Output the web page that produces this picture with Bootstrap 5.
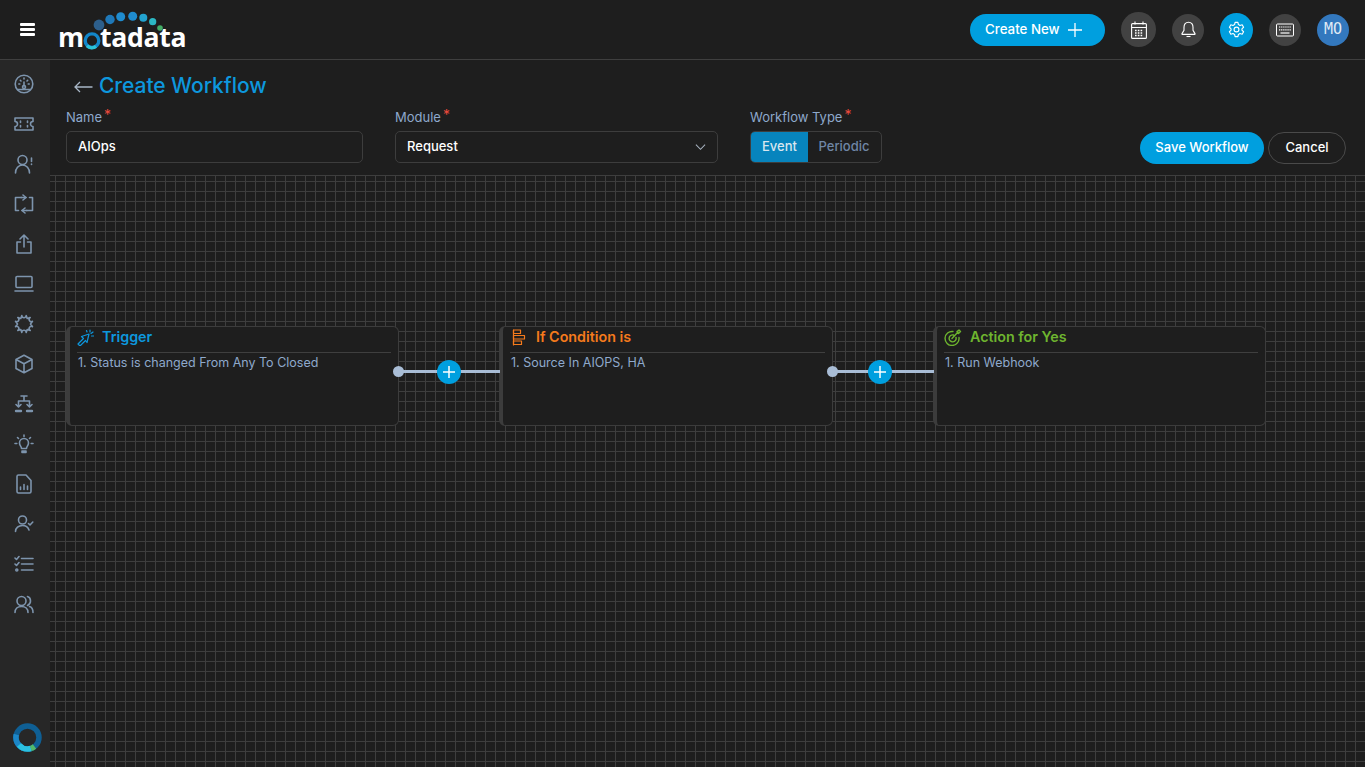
<!DOCTYPE html>
<html lang="en">
<head>
    <meta charset="UTF-8">
    <meta name="viewport" content="width=device-width, initial-scale=1.0">
    <title>Motadata - Create Workflow</title>
    <link href="https://cdn.jsdelivr.net/npm/bootstrap@5.3.0/dist/css/bootstrap.min.css" rel="stylesheet">
    <style>
        html, body { height: 100%; }
        body {
            background: #1e1e1e;
            color: #fff;
            font-family: Inter, "Liberation Sans", sans-serif;
            font-size: 13px;
            overflow: hidden;
        }
        .app-top {
            height: 60px;
            flex: none;
            padding: 0 16px 0 20px;
            background: #1e1e1e;
            border-bottom: 1px solid #3f3f3f;
        }
        .burger { width: 15px; height: 13px; display: flex; flex-direction: column; justify-content: space-between; }
        .burger i { display: block; height: 3px; background: #fff; border-radius: 1px; }

        .brand-logo {
            position: relative;
            margin-left: 23px;
            width: 130px;
            height: 44px;
            margin-top: 1px;
        }
        .brand-word {
            position: absolute;
            left: 0;
            bottom: 0;
            font-family: "Open Sans", sans-serif;
            font-weight: 700;
            font-size: 26.6px;
            line-height: 30px;
            letter-spacing: -.3px;
            color: #fff;
        }
        .brand-o { color: transparent; }
        .brand-art { position: absolute; left: 0; top: 0; }

        .btn-create {
            width: 135px;
            height: 32px;
            padding: 0 0 0 15px;
            border-radius: 16px;
            background: #009fdf;
            border: 0;
            color: #fff;
            font-size: 13.3px;
            font-weight: 500;
            margin-right: 16px;
        }
        .top-round {
            width: 32px;
            height: 32px;
            border-radius: 50%;
            background: #424242;
            flex: none;
            margin-left: 16px;
        }
        .top-round.is-big { width: 35px; height: 35px; margin-left: 0; }
        .top-round.is-blue { background: #009fdf; width: 33px; height: 34px; }
        .top-round.is-user {
            background: #3378be;
            font-family: "DejaVu Sans Mono", monospace;
            font-size: 15px;
            color: #dfe9f4;
        }

        .side-rail {
            width: 50px;
            flex: none;
            background: #272727;
            padding-top: 4px;
        }
        .rail-item { height: 40px; width: 48px; flex: none; }
        .rail-item svg { stroke: #7d94ad; fill: none; stroke-width: 1.6; stroke-linecap: round; stroke-linejoin: round; }
        .rail-ring { margin: auto 0 15px 13px; }

        .page-head { height: 115px; flex: none; padding: 0 19px 0 16px; position: relative; }
        .page-title {
            color: #0d97dd;
            font-size: 21px;
            font-weight: 500;
            margin: 0;
            padding: 12px 0 0 8px;
            line-height: 28px;
            height: 49px;
            letter-spacing: -.05px;
        }
        .page-title svg { margin: 9px 6px 0 0; flex: none; }
        .field-label {
            color: #8ea9cc;
            font-size: 13px;
            line-height: 16px;
            margin: 0 0 6px;
            display: block;
        }
        .field-label sup { color: #ef4a3c; font-size: 14px; top: -.15em; left: 2px; line-height: 0; }
        .field-name { width: 297px; margin-right: 32px; }
        .field-module { width: 323px; margin-right: 32px; }
        .dark-input.form-control, .dark-input.form-select {
            height: 32px;
            padding: 0 12px 2px 11px;
            font-size: 13px;
            font-weight: 500;
            background-color: #1e1e1e;
            color: #fff;
            border: 1px solid #3d3d3d;
            border-radius: 5px;
        }
        .dark-input.form-select {
            padding-bottom: 0;
            background-image: url("data:image/svg+xml,%3csvg xmlns='http://www.w3.org/2000/svg' viewBox='0 0 12 8'%3e%3cpath fill='none' stroke='%23a8b4c2' stroke-width='1.1' d='M1 1.5l5 5 5-5'/%3e%3c/svg%3e");
            background-size: 11px 8px;
            background-position: right 11px center;
        }
        .type-group { height: 32px; width: 132px; border: 1px solid #3d3d3d; border-radius: 5px; overflow: hidden; }
        .type-group .btn {
            padding: 0;
            border: 0;
            border-radius: 0;
            font-size: 13px;
            font-weight: 500;
            color: #6f86a6;
            background: transparent;
        }
        .type-group .btn.is-on { background: #0784bd; color: #d9e6ef; flex: 0 0 57px; }
        .head-actions { position: absolute; right: 19px; top: 72px; gap: 4px; }
        .btn-save {
            width: 124px; height: 32px; padding: 0;
            border: 0; border-radius: 16px;
            background: #009fdf; color: #fff;
            font-size: 13px; font-weight: 500;
        }
        .btn-quit {
            width: 78px; height: 32px; padding: 0;
            border: 1px solid #4a4a4a; border-radius: 16px;
            background: transparent; color: #fff;
            font-size: 13px; font-weight: 500;
        }

        .flow-canvas {
            position: relative;
            flex: 1 1 auto;
            border-top: 1px solid #3e3e3e;
            background-color: #1e1e1e;
            background-image:
                linear-gradient(#3e3e3e 1px, transparent 1px),
                linear-gradient(90deg, #3e3e3e 1px, transparent 1px);
            background-size: 10px 10px;
            background-position: 5px 5px;
        }
        .flow-node {
            position: absolute;
            top: 150px;
            height: 100px;
            width: 333px;
            background: #1e1e1e;
            border: 1px solid #3c3c3c;
            border-left: 4px solid #3c3c3c;
            border-radius: 6px;
            padding: 0 7px 0 7px;
        }
        .flow-node.is-wide { width: 334px; }
        .node-title {
            display: flex;
            align-items: center;
            height: 26px;
            padding-bottom: 5px;
            border-bottom: 1px solid #3f3f3f;
            font-size: 14.3px;
            font-weight: 600;
        }
        .node-title svg { flex: none; margin-right: 8px; fill: none; stroke: currentColor; stroke-width: 1.2; stroke-linecap: round; stroke-linejoin: round; }
        .node-title svg.icon-cond { margin-left: 2px; margin-right: 10px; }
        .node-text { color: #8ea9cc; font-size: 12.5px; line-height: 18px; padding: 1px 0 0 1px; }
        .tone-blue { color: #0d97dd; }
        .tone-orange { color: #f57a1c; }
        .tone-green { color: #6eb52f; }
        .flow-link {
            position: absolute;
            top: 194px;
            height: 3px;
            background: #a9bdd6;
        }
        .flow-link::before {
            content: "";
            position: absolute;
            left: -5px;
            top: -4px;
            width: 11px;
            height: 11px;
            border-radius: 50%;
            background: #a9bdd6;
        }
        .flow-add {
            position: absolute;
            top: -10px;
            width: 24px;
            height: 24px;
            padding: 0;
            border: 0;
            border-radius: 50%;
            background: #009fdf;
        }
    </style>
</head>
<body class="d-flex flex-column">

    <!-- top bar -->
    <header class="app-top d-flex align-items-center">
        <div class="burger"><i></i><i></i><i></i></div>
        <div class="brand-logo">
            <span class="brand-word">m<span class="brand-o">o</span>tadata</span>
            <svg class="brand-art" width="130" height="44" viewBox="0 0 130 44">
                <circle cx="41" cy="17" r="5.4" fill="#2d5f8c"/>
                <circle cx="52" cy="11.500" r="4.700" fill="#1f78b8"/>
                <circle cx="62.700" cy="8.700" r="4.500" fill="#1f8ccf"/>
                <circle cx="74.700" cy="8.300" r="4.500" fill="#1f8ccf"/>
                <circle cx="85.300" cy="9.700" r="4" fill="#23a3cf"/>
                <circle cx="94.700" cy="13.700" r="3.600" fill="#2cb8c4"/>
                <circle cx="102" cy="20" r="2.800" fill="#43ad66"/>
                <circle cx="34" cy="32.700" r="6.800" fill="none" stroke="#1386c9" stroke-width="3.400"/>
                <path d="M29 37.700a6.800 6.800 0 0 0 9 .6" fill="none" stroke="#2cc3d8" stroke-width="3.400"/>
            </svg>
        </div>
        <div class="ms-auto d-flex align-items-center">
            <button class="btn btn-create d-flex align-items-center gap-2" type="button">
                Create New
                <svg width="14" height="14" viewBox="0 0 14 14"><path d="M7 0v14M0 7h14" stroke="#fff" stroke-width="1.3"/></svg>
            </button>
            <div class="top-round is-big d-flex align-items-center justify-content-center">
                <svg width="16" height="18" viewBox="0 0 16 18" fill="none" stroke="#fff" stroke-width="1.1">
                    <rect x=".6" y="2.600" width="14.800" height="14.800" rx="1"/>
                    <path d="M.6 6.500h14.800M4 .5v3M12 .5v3"/>
                    <path d="M4 9.500h8M4 12h8M4 14.500h8" stroke-width="1.500" stroke-dasharray="1.600 1.200"/>
                </svg>
            </div>
            <div class="top-round d-flex align-items-center justify-content-center">
                <svg width="15" height="17" viewBox="0 0 15 17" fill="none" stroke="#fff" stroke-width="1.1">
                    <path d="M7.500 1.200c-3 0-4.500 2.200-4.500 5v3.200L1 12.600c-.2.4 0 .8.5.8h12c.5 0 .7-.4.5-.8l-2-3.200V6.200c0-2.800-1.500-5-4.500-5z"/>
                    <path d="M5.500 15.500h4"/>
                </svg>
            </div>
            <div class="top-round is-blue d-flex align-items-center justify-content-center">
                <svg width="17" height="17" viewBox="0 0 24 24" fill="none" stroke="#fff" stroke-width="1.600" stroke-linejoin="round">
                    <circle cx="12" cy="12" r="3.400"/>
                    <path d="M10 2h4l.7 3 2.300 1.300 3-.9 2 3.400-2.300 2.200v2l2.300 2.200-2 3.400-3-.9-2.300 1.300-.7 3h-4l-.7-3L7 17.700l-3 .9-2-3.400L4.300 13v-2L2 8.800l2-3.400 3 .9L9.300 5z"/>
                </svg>
            </div>
            <div class="top-round d-flex align-items-center justify-content-center">
                <svg width="18" height="14" viewBox="0 0 18 14" fill="none" stroke="#fff" stroke-width="1">
                    <rect x=".5" y="1" width="17" height="12" rx="1"/>
                    <path d="M3 4h12M3 6.800h12" stroke-dasharray="1.300 .8" stroke-width="1.200"/>
                    <path d="M4.500 10h9" stroke-width="1.200"/>
                </svg>
            </div>
            <div class="top-round is-user d-flex align-items-center justify-content-center">MO</div>
        </div>
    </header>

    <div class="d-flex flex-grow-1 overflow-hidden">
        <!-- left rail -->
        <nav class="side-rail d-flex flex-column">
            <div class="rail-item d-flex align-items-center justify-content-center">
                <svg width="20" height="20" viewBox="0 0 20 20"><circle cx="10" cy="10" r="8.800"/><path d="M10 4v1M4.800 10h1M14.200 10h1M6.300 6.300l.7.7M13.700 6.300l-.7.7M10 8v4M4 15.500h12"/><circle cx="10" cy="13" r="1.500"/></svg>
            </div>
            <div class="rail-item d-flex align-items-center justify-content-center">
                <svg width="20" height="16" viewBox="0 0 20 16"><path d="M1 2h18v3.500a2.500 2.500 0 0 0 0 5V14H1v-3.500a2.500 2.500 0 0 0 0-5z"/><path d="M6.500 5v1.500M6.500 9.500V11M13.500 5v1.500M13.500 9.500V11"/></svg>
            </div>
            <div class="rail-item d-flex align-items-center justify-content-center">
                <svg width="20" height="20" viewBox="0 0 20 20"><circle cx="8.500" cy="6" r="4.500"/><path d="M1.500 19c0-4.500 3-8 7-8s7 3.500 7 8M17.500 4v3.500M17.500 10v.5"/></svg>
            </div>
            <div class="rail-item d-flex align-items-center justify-content-center">
                <svg width="20" height="20" viewBox="0 0 20 20"><path d="M7.500 3.500H1.500v13h3M12.500 16.500h6v-13h-3M9 1l3 2.500L9 6M11 14l-3 2.500 3 2.500"/><path d="M7 3.500h5M8 16.500h5"/></svg>
            </div>
            <div class="rail-item d-flex align-items-center justify-content-center">
                <svg width="18" height="20" viewBox="0 0 18 20"><path d="M5.500 8H2v11h14V8h-3.500M9 13V1.500M5 5l4-4 4 4"/></svg>
            </div>
            <div class="rail-item d-flex align-items-center justify-content-center">
                <svg width="20" height="18" viewBox="0 0 20 18"><rect x="2" y="1.500" width="16" height="11" rx="1"/><path d="M1 16h18"/></svg>
            </div>
            <div class="rail-item d-flex align-items-center justify-content-center">
                <svg width="20" height="20" viewBox="0 0 20 20"><path d="M7.800 1.500a2 2 0 0 0 4.400 0l1 3 3-1a2 2 0 0 0 2.300 3.800l-2 2.700 2 2.700a2 2 0 0 0-2.300 3.800l-3-1-1 3a2 2 0 0 0-4.400 0l-1-3-3 1a2 2 0 0 0-2.300-3.800l2-2.700-2-2.700a2 2 0 0 0 2.300-3.800l3 1z"/></svg>
            </div>
            <div class="rail-item d-flex align-items-center justify-content-center">
                <svg width="20" height="20" viewBox="0 0 20 20"><path d="M10 1.200l8 4.300v9L10 18.800l-8-4.300v-9zM2 5.500l8 4.300 8-4.300M10 9.800v9"/></svg>
            </div>
            <div class="rail-item d-flex align-items-center justify-content-center">
                <svg width="20" height="20" viewBox="0 0 20 20"><path d="M7 2h6M10 2v5M4.500 11.500V7h11v4.500M2 10.500l2.500 2.500L7 10.500M13 10.500l2.500 2.500 2.500-2.500"/><path d="M2 17h5M13 17h5" stroke-width="2.400"/></svg>
            </div>
            <div class="rail-item d-flex align-items-center justify-content-center">
                <svg width="20" height="20" viewBox="0 0 20 20"><path d="M7.500 14.500c0-2-2-2.800-2-5.500a4.500 4.500 0 0 1 9 0c0 2.700-2 3.500-2 5.500zM8 17h4v1.500H8zM10 1v1.500M3.500 3.500l1 1M16.500 3.500l-1 1M1 9.500h1.800M17.200 9.500H19"/></svg>
            </div>
            <div class="rail-item d-flex align-items-center justify-content-center">
                <svg width="16" height="20" viewBox="0 0 16 20"><path d="M10 1H2.500C1.500 1 1 1.500 1 2.500v15c0 1 .5 1.500 1.500 1.500h11c1 0 1.500-.5 1.500-1.500V6.500z"/><path d="M4.500 15.500V13M8 15.500v-5M11.500 15.500V12" stroke-width="1.600"/></svg>
            </div>
            <div class="rail-item d-flex align-items-center justify-content-center">
                <svg width="20" height="18" viewBox="0 0 20 18"><circle cx="8.500" cy="5" r="4"/><path d="M1.500 16.500c0-3.500 3-6 7-6 2.500 0 5.500 1.500 6.500 4.500M14.500 8.500l1.500 1.500 2.800-3"/></svg>
            </div>
            <div class="rail-item d-flex align-items-center justify-content-center">
                <svg width="20" height="18" viewBox="0 0 20 18"><path d="M1 3l1.500 1.500L5 1.500M1 9l1.500 1.500L5 7.500M7.500 3.500h11.500M7.500 9h11.500M7.500 15h11.500"/><circle cx="2.800" cy="15" r="1"/></svg>
            </div>
            <div class="rail-item d-flex align-items-center justify-content-center">
                <svg width="20" height="19" viewBox="0 0 20 19"><circle cx="7.500" cy="6" r="4.500"/><path d="M1 17.500c0-3.500 2.500-6 6.500-6s6.500 2.500 6.500 6M13.500 1.500c2 .5 3 2.300 3 4.500s-1 3.500-3 4.500M15.500 11.500c2 .5 3.500 3 3.500 6"/></svg>
            </div>
            <svg class="rail-ring" width="29" height="29" viewBox="0 0 29 29" fill="none" stroke-width="5.500">
                <circle cx="14.500" cy="14.500" r="11.500" stroke="#0f5f94"/>
                <path d="M10 25.100A11.500 11.500 0 0 1 3.300 11.500" stroke="#1c86c7"/>
                <path d="M18 25.500A11.500 11.500 0 0 1 6 22" stroke="#2bc0e0"/>
                <path d="M21.500 23.500A11.500 11.500 0 0 1 17.800 25.500" stroke="#52b96a"/>
            </svg>
        </nav>

        <main class="d-flex flex-column flex-grow-1">
            <section class="page-head">
                <h1 class="page-title d-flex">
                    <svg width="19" height="12" viewBox="0 0 19 12" fill="none" stroke="#a8b6c6" stroke-width="1.300"><path d="M18.500 6H1M6 1L1 6l5 5"/></svg>
                    Create Workflow
                </h1>
                <div class="d-flex">
                    <div class="field-name">
                        <label class="field-label">Name<sup>*</sup></label>
                        <input class="form-control dark-input" type="text" value="AIOps">
                    </div>
                    <div class="field-module">
                        <label class="field-label">Module<sup>*</sup></label>
                        <select class="form-select dark-input"><option>Request</option></select>
                    </div>
                    <div>
                        <label class="field-label">Workflow Type<sup>*</sup></label>
                        <div class="btn-group type-group d-flex">
                            <button class="btn is-on" type="button">Event</button>
                            <button class="btn" type="button">Periodic</button>
                        </div>
                    </div>
                </div>
                <div class="head-actions d-flex">
                    <button class="btn btn-save" type="button">Save Workflow</button>
                    <button class="btn btn-quit" type="button">Cancel</button>
                </div>
            </section>

            <section class="flow-canvas">
                <div class="flow-node" style="left:16px">
                    <div class="node-title tone-blue">
                        <svg width="17" height="17" viewBox="0 0 17 17"><path d="M12 5L4.500 7.500 6.500 9.500 1 15l2 2 5.500-5.500 1.500 2zM13 1v2M16 3l-2 1.500M16.500 7h-2M9.500 1.500l.5 1.500"/></svg>
                        Trigger
                    </div>
                    <div class="node-text">1. Status is changed From Any To Closed</div>
                </div>
                <div class="flow-node is-wide" style="left:449px">
                    <div class="node-title tone-orange">
                        <svg class="icon-cond" width="14" height="17" viewBox="0 0 14 17"><path d="M1.500 1v15"/><rect x="1.500" y="1" width="7" height="3.500"/><rect x="1.500" y="6.500" width="11" height="3.500"/><rect x="1.500" y="12" width="8" height="3.500"/></svg>
                        If Condition is
                    </div>
                    <div class="node-text">1. Source In AIOPS, HA</div>
                </div>
                <div class="flow-node" style="left:883px">
                    <div class="node-title tone-green">
                        <svg width="18" height="17" viewBox="0 0 18 17"><path d="M9 2.500a7 7 0 1 0 6 6M9.500 6a3.500 3.500 0 1 0 2.500 2.500M8 9.500l6-6.500M13 2.500l2-1.500 1.500 1.500-2 2z" stroke-width="1.400"/></svg>
                        Action for Yes
                    </div>
                    <div class="node-text">1. Run Webhook</div>
                </div>

                <div class="flow-link" style="left:348px;width:102px">
                    <button class="flow-add d-flex align-items-center justify-content-center" style="left:39px" type="button">
                        <svg width="12" height="12" viewBox="0 0 12 12"><path d="M6 0v12M0 6h12" stroke="#fff" stroke-width="1.500"/></svg>
                    </button>
                </div>
                <div class="flow-link" style="left:782px;width:102px">
                    <button class="flow-add d-flex align-items-center justify-content-center" style="left:36px" type="button">
                        <svg width="12" height="12" viewBox="0 0 12 12"><path d="M6 0v12M0 6h12" stroke="#fff" stroke-width="1.500"/></svg>
                    </button>
                </div>
            </section>
        </main>
    </div>

    <script src="https://cdn.jsdelivr.net/npm/bootstrap@5.3.0/dist/js/bootstrap.bundle.min.js"></script>
</body>
</html>
